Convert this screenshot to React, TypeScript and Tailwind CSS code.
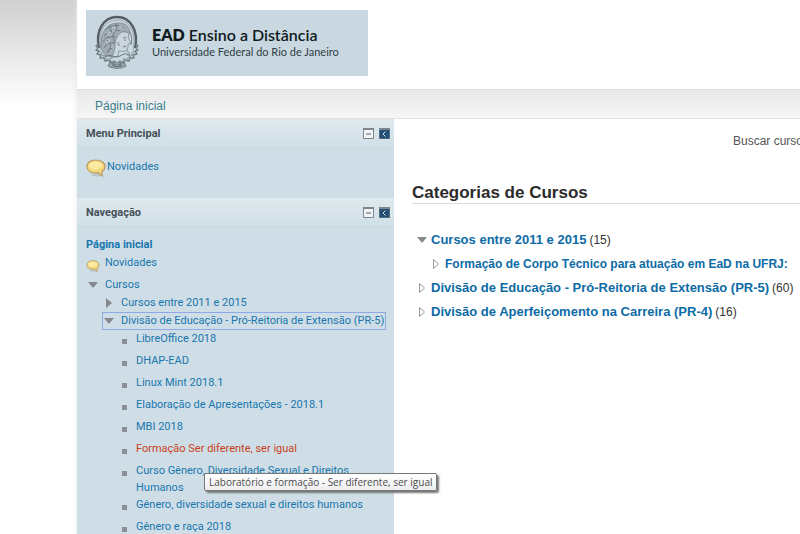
import type { ReactNode } from 'react';

const courses = [
  { name: 'LibreOffice 2018' },
  { name: 'DHAP-EAD' },
  { name: 'Linux Mint 2018.1' },
  { name: 'Elaboração de Apresentações - 2018.1' },
  { name: 'MBI 2018' },
  { name: 'Formação Ser diferente, ser igual', tooltip: 'Laboratório e formação - Ser diferente, ser igual' },
  { name: 'Curso Gênero, Diversidade Sexual e Direitos Humanos' },
  { name: 'Gênero, diversidade sexual e direitos humanos' },
  { name: 'Gênero e raça 2018' },
];

function Emblem() {
  return (
    <svg viewBox="0 0 46 56" className="h-14 w-[46px] shrink-0" fill="none" stroke="#66717c" aria-hidden="true">
      <path d="M5 33C1 15 10 2 23 2s22 13 18 31" stroke="#565f68" strokeWidth="2.4" />
      <path d="M7 35C3 17 11 5 23 5s20 12 16 30" stroke="#98a4ad" strokeWidth="1" />
      {/* Helmet and hair */}
      <path
        d="M9 37c-4-8-2-20 5-26 5-4 15-4 19 0 3 3 3 6 2 8-3-3-7-3-9 0-1 3-4 4-4 8 0 5 1 8-2 12-2 3-7 4-11-2z"
        fill="#a0acb5"
        stroke="#78848e"
        strokeWidth=".8"
      />
      <path d="M12 15c4-5 12-6 18-2M10 21c5-6 10-7 16-5M9 27c3-5 8-6 13-5M10 33c3-5 6-6 11-5M13 38c2-4 4-5 8-5M15 11c3 3 3 7 0 10s-2 6 1 8-2 6-2 8M22 9c1 4 0 7-2 9s-1 6 1 9" stroke="#67727c" strokeWidth=".9" />
      <path d="M13 18c2-2 4-1 4 1s-3 2-3 0M18 13c2-2 4 0 3 2s-3 1-3-1M12 25c2-2 4 0 3 2s-3 1-2-1M25 12c2-1 4 0 3 2M17 32c2-1 3 1 2 2" stroke="#d2dde3" strokeWidth=".9" />
      {/* Face and neck */}
      <path
        d="M26 18c3-2 8-1 9 1l-1 4 3 5-3 1 0 3-1 3c-2 2-5 1-8 1l-1 5-7 2c3-5 4-9 4-13 0-5 2-9 5-12z"
        fill="#c9d6dd"
        stroke="#7c8892"
        strokeWidth=".8"
      />
      <path d="M29 23l3-1M30 25h2M29 32l3-1M25 27c-2 1-1 4 1 3M35 16c3 4 3 9 2 14M33 36c2 1 3 2 2 4" strokeWidth=".9" />
      <path d="M11 42c6-4 10 2 15-1s8-3 10 1" strokeWidth="1" />
      {/* Laurel around the foot */}
      <path
        d="M4 29l-2 2 2 2-2 2 3 1-2 3 4 1-1 3 4 0 1 3 4-1 2 3 3-2 3 2 3-2 3 2 2-3 4 1 1-3 4 0-1-3 4-1-2-3 3-1-2-2 2-2-2-2"
        stroke="#717c86"
        strokeWidth="1.4"
        strokeLinejoin="round"
      />
      <path d="M6 36c3 6 8 10 17 12 9-2 14-6 17-12M9 41l4-1M14 46l3-3M37 41l-4-1M32 46l-3-3" stroke="#8a959f" strokeWidth="1.1" />
      <path d="M16 47c4 3 10 3 14 0l2 4c-5 3-13 3-18 0z" fill="#9aa6af" stroke="#66717b" strokeWidth=".9" />
      <path d="M18 50c3 2 7 2 10 0M20 47v4M26 47v4" stroke="#57626c" strokeWidth=".9" />
    </svg>
  );
}

function BubbleIcon({ className }: { className: string }) {
  return (
    <svg viewBox="0 0 20 18" className={className} aria-hidden="true">
      <ellipse cx="11" cy="16" rx="6" ry="1.4" fill="#b8c4ca" />
      <path
        d="M9.500 1C4.500 1 1 3.500 1 7.500S4.500 14 9.500 14l3-.3c.8 1.500 2 2.600 4 3.300-.6-1.500-.8-2.800-.5-4.400C18 11.500 19 9.500 19 7.500 19 3.500 14.500 1 9.500 1z"
        fill="#f2d67c"
        stroke="#b99a64"
        strokeWidth="1.200"
      />
      <ellipse cx="9.500" cy="6.500" rx="6.800" ry="4" fill="#fbeaa0" />
    </svg>
  );
}

function Arrow({ open, outline }: { open?: boolean; outline?: boolean }) {
  return (
    <svg viewBox="0 0 12 12" className="size-3 shrink-0" aria-hidden="true">
      {open ? (
        <path d="M1 3h10L6 9z" fill="#86898e" />
      ) : outline ? (
        <path d="M3.500 1.500v9l5-4.500z" fill="#fff" stroke="#9a9a9a" />
      ) : (
        <path d="M3 1v10l6-5z" fill="#86898e" />
      )}
    </svg>
  );
}

function Block({ title, children }: { title: string; children: ReactNode }) {
  return (
    <section>
      <header className="flex h-[29px] items-center justify-between border-b border-[#c8dae3] bg-gradient-to-b from-[#dfe9ed] to-[#d0e0e7] pr-1 pl-[9px]">
        <h2 className="pt-px text-[11px] font-bold text-[#45505a]">{title}</h2>
        <div className="flex gap-[5px]">
          <button type="button" aria-label={`Ocultar bloco ${title}`}>
            <svg viewBox="0 0 11 11" className="size-[11px]">
              <path d="M.5.5h10v10H.5z" fill="#f1f4f5" stroke="#7d868d" />
              <path d="M0 1h11" stroke="#7d868d" strokeWidth="2" />
              <path d="M3 6h5" stroke="#555f68" />
            </svg>
          </button>
          <button type="button" aria-label={`Mover ${title} para a barra lateral`}>
            <svg viewBox="0 0 11 11" className="size-[11px]">
              <path d="M.5.5h10v10H.5z" fill="#234f74" stroke="#536b7f" />
              <path d="M0 1h11" stroke="#7b8790" strokeWidth="2" />
              <path d="M6.500 3.500L4 6l2.500 2.500" fill="none" stroke="#d6e2ea" />
            </svg>
          </button>
        </div>
      </header>
      {children}
    </section>
  );
}

function Category({ name, count, open }: { name: string; count: number; open?: boolean }) {
  return (
    <div className="flex items-center gap-[3px] pl-1">
      <Arrow open={open} outline />
      <a href="#" className="text-[13px] font-bold text-[#0d6ba6]">
        {name}
      </a>
      <span className="text-xs text-[#333]">({count})</span>
    </div>
  );
}

export default function App() {
  return (
    <div className="h-screen overflow-hidden bg-white bg-gradient-to-b from-[#d0d0d0] to-white bg-[length:100%_106px] bg-no-repeat pl-[77px] font-['Liberation_Sans',Arial,sans-serif]">
      <div className="min-w-[947px] bg-white shadow-[0_0_5px_#e8e8e8]">
        <header className="border-b border-[#dedede] px-[9px] pt-[10px] pb-[13px]">
          <div className="flex h-[66px] w-[282px] items-center gap-[10px] bg-[#c9d8e0] pl-2 font-['Lato',sans-serif]">
            <Emblem />
            <div className="pl-[2px]">
              <h1 className="text-base leading-[18px] text-[#101a20]">
                <b className="font-extrabold">EAD</b> <span className="font-semibold">Ensino a Distância</span>
              </h1>
              <p className="text-[11px] leading-4 text-[#303c44]">Universidade Federal do Rio de Janeiro</p>
            </div>
          </div>
        </header>

        <nav className="flex h-[29px] items-center border-b border-[#e2e2e2] bg-gradient-to-b from-[#e9e9e9] to-[#f6f6f6] px-[18px] pt-1 text-xs">
          <a href="#" className="text-[#39808c]">
            Página inicial
          </a>
        </nav>

        <div className="flex">
          <aside className="w-[317px] shrink-0 bg-[#cfdee6] font-['Roboto',sans-serif] text-[11px] leading-[18px] text-[#1876ae]">
            <Block title="Menu Principal">
              <div className="flex h-[50px] items-start pt-[10px] pl-[9px]">
                <BubbleIcon className="mt-px h-[18px] w-5" />
                <a href="#" className="pl-px">
                  Novidades
                </a>
              </div>
            </Block>

            <Block title="Navegação">
              <div className="pt-[9px] pr-[9px] pl-[9px]">
                <a href="#" className="block font-bold">
                  Página inicial
                </a>
                <div className="flex h-[22px] items-start gap-[5px]">
                  <BubbleIcon className="mt-[6px] h-3 w-[14px]" />
                  <a href="#">Novidades</a>
                </div>
                <div className="flex items-center gap-[6px] pl-px">
                  <Arrow open />
                  <a href="#">Cursos</a>
                </div>
                <div className="flex items-center gap-[6px] pl-[17px]">
                  <Arrow />
                  <a href="#">Cursos entre 2011 e 2015</a>
                </div>
                <div className="ml-4 flex h-[18px] w-fit items-center gap-[6px] border border-[#8fa9e6] pr-px whitespace-nowrap">
                  <Arrow open />
                  <a href="#" className="leading-[14px]">
                    Divisão de Educação - Pró-Reitoria de Extensão (PR-5)
                  </a>
                </div>
                <ul className="pl-9">
                  {courses.map((course) => (
                    <li key={course.name} className="relative flex min-h-[22px] items-start gap-[9px]">
                      <span className="mt-[9px] size-[5px] shrink-0 bg-[#8b8f98]" />
                      <a href="#" className={course.tooltip ? 'leading-[17px] text-[#c93f1c]' : 'max-w-[230px] leading-[17px]'}>
                        {course.name}
                      </a>
                      {course.tooltip && (
                        <div
                          role="tooltip"
                          className="absolute top-[33px] left-[82px] z-10 rounded-xs border border-[#777] bg-gradient-to-b from-white to-[#eeeef2] px-1 font-['Open_Sans',sans-serif] text-[10px] leading-4 whitespace-nowrap text-[#4c4c4c] shadow-[2px_2px_2px_#777]"
                        >
                          {course.tooltip}
                        </div>
                      )}
                    </li>
                  ))}
                </ul>
              </div>
            </Block>
          </aside>

          <main className="min-w-0 grow px-[18px] pt-3 whitespace-nowrap">
            <form className="flex items-center justify-end gap-2 text-xs text-[#555]">
              <label htmlFor="search">Buscar cursos</label>
              <input id="search" type="text" className="h-5 w-[189px] border border-[#bbb] bg-white px-1" />
            </form>

            <h2 className="mt-8 border-b border-[#dcdcdc] text-[17px] leading-5 font-bold text-[#2b2b2b]">
              Categorias de Cursos
            </h2>

            <div className="flex flex-col pt-6 leading-6">
              <Category name="Cursos entre 2011 e 2015" count={15} open />
              <div className="flex items-center gap-[3px] pl-[18px]">
                <Arrow outline />
                <a href="#" className="text-xs leading-6 font-bold text-[#0d6ba6]">
                  Formação de Corpo Técnico para atuação em EaD na UFRJ:
                </a>
              </div>
              <Category name="Divisão de Educação - Pró-Reitoria de Extensão (PR-5)" count={60} />
              <Category name="Divisão de Aperfeiçomento na Carreira (PR-4)" count={16} />
            </div>
          </main>
        </div>
      </div>
    </div>
  );
}
